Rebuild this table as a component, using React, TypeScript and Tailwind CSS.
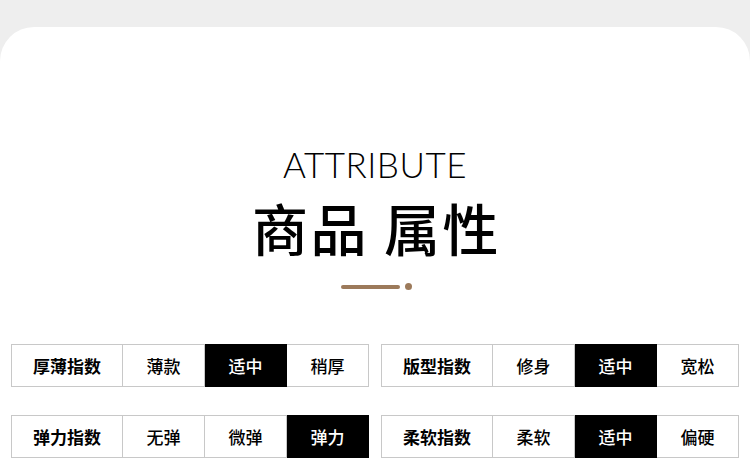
const ROWS = [
	[
		{ label: '厚薄指数', options: ['薄款', '适中', '稍厚'], active: 1 },
		{ label: '版型指数', options: ['修身', '适中', '宽松'], active: 1 },
	],
	[
		{ label: '弹力指数', options: ['无弹', '微弹', '弹力'], active: 2 },
		{ label: '柔软指数', options: ['柔软', '适中', '偏硬'], active: 1 },
	],
];

type Attr = { label: string; options: string[]; active: number };

function AttrRow({ attr }: { attr: Attr }) {
	return (
		<div className="flex h-[43px]">
			<div className="flex w-[112px] items-center justify-center border border-[#c8c8c8] text-[17px] font-bold text-black">
				{attr.label}
			</div>
			{attr.options.map((opt, i) => (
				<div
					key={opt}
					className={`flex w-[82px] items-center justify-center border-y border-r text-[17px] font-medium ${
						i === attr.active ? 'border-black bg-black text-white' : 'border-[#c8c8c8] text-black'
					}`}
				>
					{opt}
				</div>
			))}
		</div>
	);
}

export default function App() {
	return (
		<div
			className="h-[459px] w-[750px] overflow-hidden bg-[#eeeeee] pt-[27px]"
			style={{ fontFamily: '"Noto Sans CJK SC", "Noto Sans", sans-serif' }}
		>
			<div className="flex h-full flex-col items-center rounded-t-[34px] bg-white">
				{/* Heading */}
				<div
					className="mt-[115px] text-[35px] leading-[44px] font-light tracking-[0.5px] text-black"
					style={{ fontFamily: 'Lato, "Open Sans", sans-serif' }}
				>
					ATTRIBUTE
				</div>
				<div className="mt-[9px] pl-[3px] text-[56px] leading-[64px] font-medium tracking-[2.5px] text-black">
					商品 属性
				</div>

				{/* Divider */}
				<div className="mt-[24px] flex items-center gap-[5px] pl-[3px]">
					<div className="h-[4px] w-[59px] rounded-full bg-[#9c7a5b]" />
					<div className="h-[7px] w-[7px] rounded-full bg-[#9c7a5b]" />
				</div>

				{/* Attribute table */}
				<div className="mt-[54px] flex w-full flex-col gap-[28px] px-[11px]">
					{ROWS.map((row, r) => (
						<div key={r} className="flex justify-between">
							{row.map((attr) => (
								<AttrRow key={attr.label} attr={attr} />
							))}
						</div>
					))}
				</div>
			</div>
		</div>
	);
}
